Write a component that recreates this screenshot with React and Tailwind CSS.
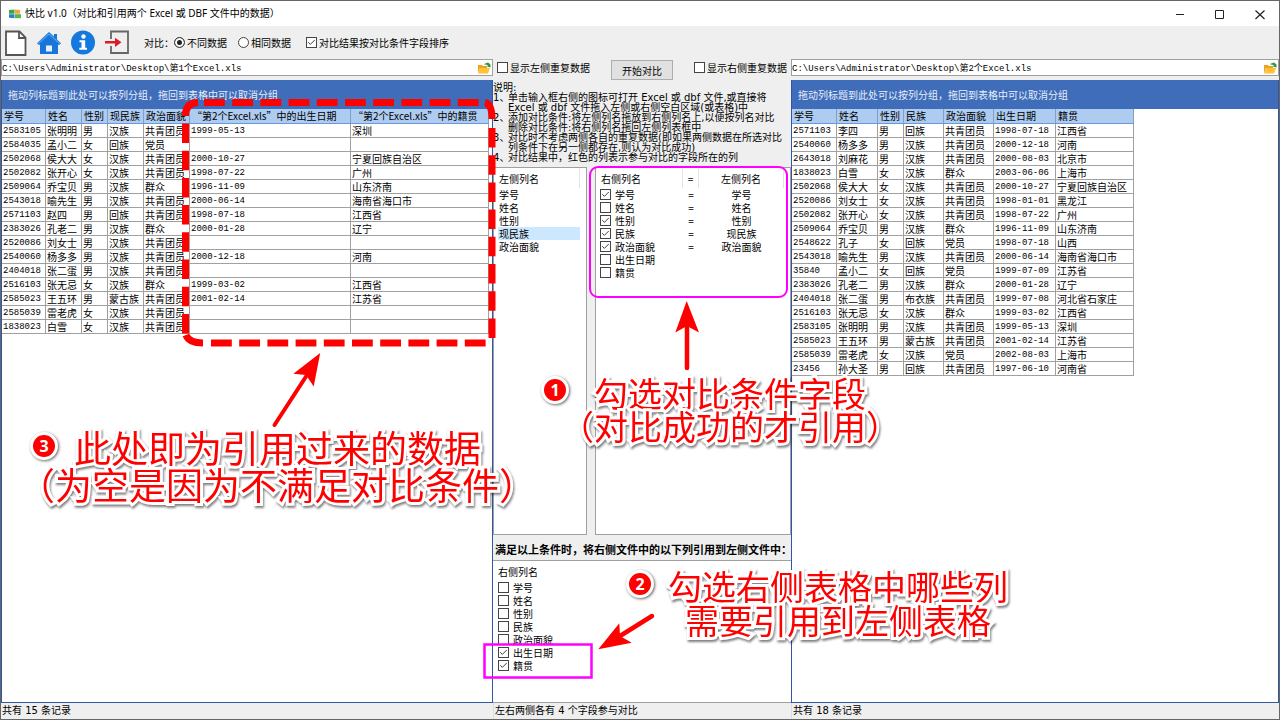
import React from 'react';
import { Check } from 'lucide-react';

const leftColumns = [
  { name: '学号', width: 'w-[44px]' },
  { name: '姓名', width: 'w-[36px]' },
  { name: '性别', width: 'w-[26px]' },
  { name: '现民族', width: 'w-[36px]' },
  { name: '政治面貌', width: 'w-[46px]' },
  { name: '“第2个Excel.xls”中的出生日期', width: 'w-[161px]' },
  { name: '“第2个Excel.xls”中的籍贯', width: 'w-[138px]' },
];

const leftRows = [
  ['2583105', '张明明', '男', '汉族', '共青团员', '1999-05-13', '深圳'],
  ['2584035', '孟小二', '女', '回族', '党员', '', ''],
  ['2502068', '侯大大', '女', '汉族', '共青团员', '2000-10-27', '宁夏回族自治区'],
  ['2502082', '张开心', '女', '汉族', '共青团员', '1998-07-22', '广州'],
  ['2509064', '乔宝贝', '男', '汉族', '群众', '1996-11-09', '山东济南'],
  ['2543018', '喻先生', '男', '汉族', '共青团员', '2000-06-14', '海南省海口市'],
  ['2571103', '赵四', '男', '回族', '共青团员', '1998-07-18', '江西省'],
  ['2383026', '孔老二', '男', '汉族', '群众', '2000-01-28', '辽宁'],
  ['2520086', '刘女士', '男', '汉族', '共青团员', '', ''],
  ['2540060', '杨多多', '男', '汉族', '共青团员', '2000-12-18', '河南'],
  ['2404018', '张二蛋', '男', '汉族', '共青团员', '', ''],
  ['2516103', '张无忌', '女', '汉族', '群众', '1999-03-02', '江西省'],
  ['2585023', '王五环', '男', '蒙古族', '共青团员', '2001-02-14', '江苏省'],
  ['2585039', '雷老虎', '女', '汉族', '共青团员', '', ''],
  ['1838023', '白雪', '女', '汉族', '共青团员', '', ''],
];

const rightColumns = [
  { name: '学号', width: 'w-[45px]' },
  { name: '姓名', width: 'w-[41px]' },
  { name: '性别', width: 'w-[26px]' },
  { name: '民族', width: 'w-[40px]' },
  { name: '政治面貌', width: 'w-[50px]' },
  { name: '出生日期', width: 'w-[62px]' },
  { name: '籍贯', width: 'w-[78px]' },
];

const rightRows = [
  ['2571103', '李四', '男', '回族', '共青团员', '1998-07-18', '江西省'],
  ['2540060', '杨多多', '男', '汉族', '共青团员', '2000-12-18', '河南'],
  ['2643018', '刘麻花', '男', '汉族', '共青团员', '2000-08-03', '北京市'],
  ['1838023', '白雪', '女', '汉族', '群众', '2003-06-06', '上海市'],
  ['2502068', '侯大大', '女', '汉族', '共青团员', '2000-10-27', '宁夏回族自治区'],
  ['2520086', '刘女士', '女', '汉族', '共青团员', '1998-01-01', '黑龙江'],
  ['2502082', '张开心', '女', '汉族', '共青团员', '1998-07-22', '广州'],
  ['2509064', '乔宝贝', '男', '汉族', '群众', '1996-11-09', '山东济南'],
  ['2548622', '孔子', '女', '回族', '党员', '1998-07-18', '山西'],
  ['2543018', '喻先生', '男', '汉族', '共青团员', '2000-06-14', '海南省海口市'],
  ['35840', '孟小二', '女', '回族', '党员', '1999-07-09', '江苏省'],
  ['2383026', '孔老二', '男', '汉族', '群众', '2000-01-28', '辽宁'],
  ['2404018', '张二蛋', '男', '布衣族', '共青团员', '1999-07-08', '河北省石家庄'],
  ['2516103', '张无忌', '女', '汉族', '群众', '1999-03-02', '江西省'],
  ['2583105', '张明明', '男', '汉族', '共青团员', '1999-05-13', '深圳'],
  ['2585023', '王五环', '男', '蒙古族', '共青团员', '2001-02-14', '江苏省'],
  ['2585039', '雷老虎', '女', '汉族', '党员', '2002-08-03', '上海市'],
  ['23456', '孙大圣', '男', '回族', '共青团员', '1997-06-10', '河南省'],
];

const leftFields = ['学号', '姓名', '性别', '现民族', '政治面貌'];

const mappings = [
  { right: '学号', left: '学号', checked: true },
  { right: '姓名', left: '姓名', checked: false },
  { right: '性别', left: '性别', checked: true },
  { right: '民族', left: '现民族', checked: true },
  { right: '政治面貌', left: '政治面貌', checked: true },
  { right: '出生日期', left: '', checked: false },
  { right: '籍贯', left: '', checked: false },
];

const quoteFields = [
  { name: '学号', checked: false },
  { name: '姓名', checked: false },
  { name: '性别', checked: false },
  { name: '民族', checked: false },
  { name: '政治面貌', checked: false },
  { name: '出生日期', checked: true },
  { name: '籍贯', checked: true },
];

const help = [
  ['单击输入框右侧的图标可打开 Excel 或 dbf 文件,或直接将', 'Excel 或 dbf 文件拖入左侧或右侧空白区域(或表格)中'],
  ['添加对比条件:将左侧列名拖放到右侧列名上,以便按列名对比', '删除对比条件:将右侧列名拖回左侧列表框中'],
  ['对比时不考虑两侧各自的重复数据(即如果两侧数据在所选对比', '列条件下在另一侧都存在,则认为对比成功)'],
  ['对比结果中，红色的列表示参与对比的字段所在的列'],
];

const Checkbox = ({ label, checked, gap = 'gap-[2px]' }) => (
  <label className={`flex items-center whitespace-nowrap ${gap}`}>
    <span className="grid h-[11px] w-[11px] shrink-0">
      <input
        type="checkbox"
        defaultChecked={checked}
        className="peer col-start-1 row-start-1 h-[11px] w-[11px] appearance-none border border-[#444] bg-white"
      />
      <Check
        className="pointer-events-none invisible col-start-1 row-start-1 h-[11px] w-[11px] p-px text-[#333] peer-checked:visible"
        strokeWidth={2.5}
      />
    </span>
    {label}
  </label>
);

const Radio = ({ label, checked }) => (
  <label className="flex items-center gap-[2px] whitespace-nowrap">
    <input
      type="radio"
      name="mode"
      defaultChecked={checked}
      className="h-[11px] w-[11px] appearance-none rounded-full border border-[#444] bg-white checked:bg-[#222] checked:shadow-[inset_0_0_0_2px_white]"
    />
    {label}
  </label>
);

const FolderIcon = () => (
  <svg viewBox="0 0 14 12" className="h-3 w-[14px]">
    <path d="M1 3h4l1 1h4v2H3L1 11z" fill="#f0a020" />
    <path d="M3 6h10l-2 5.500H1z" fill="#ffc23c" />
    <path d="M7 2.500Q8 .5 10.500 1V0L13.500 2.500V5.500L10 4.500L11 3.500Q9 2 7 2.500z" fill="#2c9c3c" />
  </svg>
);

const DataTable = ({ columns, rows }) => (
  <table className="table-fixed border-separate border-spacing-0 self-start">
    <colgroup>
      {columns.map((c) => (
        <col key={c.name} className={c.width} />
      ))}
    </colgroup>
    <thead>
      <tr className="bg-[#aecbf0]">
        {columns.map((c) => (
          <th
            key={c.name}
            className="h-[15px] overflow-hidden border-r border-b border-r-[#7f9fcc] border-b-[#6a98dc] p-0 pl-[2px] text-left leading-[14px] font-normal whitespace-nowrap"
          >
            {c.name}
          </th>
        ))}
      </tr>
    </thead>
    <tbody>
      {rows.map((row) => (
        <tr key={row[0]}>
          {row.map((value, i) => (
            <td
              key={columns[i].name}
              className={`h-[14px] overflow-hidden border-r border-b border-[#a0a0a0] p-0 pl-px whitespace-nowrap ${
                i === 0 || i === 5
                  ? 'pt-[2px] font-["Liberation_Mono",monospace] text-[9px] leading-[11px]'
                  : 'leading-[13px]'
              }`}
            >
              {value}
            </td>
          ))}
        </tr>
      ))}
    </tbody>
  </table>
);

const FilePane = ({ path, label, columns, rows }) => (
  <section className="flex min-w-0 flex-col">
    <div className="mb-1 flex h-[17px] items-center border border-[#a0a0a0] bg-white pr-px">
      <input
        type="text"
        aria-label={label}
        defaultValue={path}
        className='h-full min-w-0 flex-1 bg-transparent font-["Liberation_Mono","Noto_Sans_CJK_SC",monospace] text-[9px] outline-none'
      />
      <button type="button" aria-label="打开文件">
        <FolderIcon />
      </button>
    </div>
    <div className="flex min-h-0 flex-1 flex-col overflow-hidden border-x border-b border-[#2f57a8] bg-white">
      <div className="flex h-[29px] shrink-0 items-center bg-[#3f6db9] px-[6px] whitespace-nowrap text-[#e6eefb]">
        拖动列标题到此处可以按列分组，拖回到表格中可以取消分组
      </div>
      <DataTable columns={columns} rows={rows} />
    </div>
  </section>
);

const Toolbar = () => (
  <div className="flex h-[33px] shrink-0 items-center pl-[3px] whitespace-nowrap">
    <button type="button" aria-label="新建" className="mr-2">
      <svg viewBox="0 0 24 28" className="h-7 w-6">
        <path d="M2 2.500h13.500l6 6V26H2z" fill="#fff" stroke="#555" strokeWidth="1.800" />
        <path d="M15 2.500V9h6.500" fill="none" stroke="#555" strokeWidth="1.800" />
      </svg>
    </button>
    <button type="button" aria-label="主页" className="mr-2">
      <svg viewBox="0 0 26 26" className="h-[26px] w-[26px]">
        <path d="M13 2l5 4.500V4h3v5.500l4 3.700-1.500 1.600H22V24H4v-9.200H2.500L1 13.200z" fill="#1976d8" />
        <path d="M2 13.800L13 4l11 9.800" fill="none" stroke="#4ea0f0" strokeWidth="1.200" />
        <path d="M10 15.500h6v6h-6z" fill="#e4f0fc" />
      </svg>
    </button>
    <button type="button" aria-label="关于" className="mr-2">
      <svg viewBox="0 0 26 26" className="h-[26px] w-[26px]">
        <circle cx="13" cy="12.500" r="12" fill="#1478dc" />
        <circle cx="13.500" cy="6.500" r="2.200" fill="#fff" />
        <path d="M9.500 10.300h5.700v7.400h1.800v2H9.300v-2h2.200v-5.400h-2z" fill="#fff" />
      </svg>
    </button>
    <button type="button" aria-label="退出" className="mr-[14px]">
      <svg viewBox="0 0 26 26" className="h-[26px] w-[26px]">
        <path d="M7 9V1.500h17v21.500H7V16" fill="none" stroke="#666" strokeWidth="1.800" />
        <path d="M1 11h10V7.700l6.500 4.600L11 17v-3.400H1z" fill="#d81e28" />
      </svg>
    </button>
    <span>对比：</span>
    <div className="flex items-center gap-[11px]">
      <Radio label="不同数据" checked />
      <Radio label="相同数据" />
    </div>
    <div className="ml-[15px]">
      <Checkbox label="对比结果按对比条件字段排序" checked />
    </div>
  </div>
);

const ComparePanel = () => (
  <section className="flex min-w-0 flex-col">
    <div className="flex h-[21px] items-start justify-between px-1 pt-px">
      <Checkbox label="显示左侧重复数据" gap="gap-[2px]" />
      <button
        type="button"
        className="h-5 w-[62px] border border-[#adadad] bg-[#e1e1e1] whitespace-nowrap"
      >
        开始对比
      </button>
      <Checkbox label="显示右侧重复数据" gap="gap-[2px]" />
    </div>

    <div className='mb-1 pt-[3px] font-["DejaVu_Sans","Noto_Sans_CJK_SC",sans-serif] leading-[10px] whitespace-nowrap'>
      <p>说明:</p>
      <ol>
        {help.map((lines, i) => (
          <li key={lines[0]} className="flex">
            <span className="w-[15px] shrink-0">{i + 1}、</span>
            <div>
              {lines.map((line) => (
                <p key={line} className="h-[10px]">
                  {line}
                </p>
              ))}
            </div>
          </li>
        ))}
      </ol>
    </div>

    <div className="flex flex-1 gap-2">
      <div className="w-[94px] shrink-0 border border-[#a0a0a0] bg-white pr-[6px] pl-1">
        <div className="flex h-[20px] items-center border-r border-[#e4e4e4] pl-px">左侧列名</div>
        <ul>
          {leftFields.map((f) => (
            <li key={f} className={`h-[13px] pl-px leading-[13px] ${f === '现民族' ? 'bg-[#cce8ff]' : ''}`}>
              {f}
            </li>
          ))}
        </ul>
      </div>
      <div className="flex-1 border border-[#a0a0a0] bg-white">
        <table className="table-fixed border-separate border-spacing-0">
          <colgroup>
            <col className="w-[87px]" />
            <col className="w-[16px]" />
            <col className="w-[85px]" />
          </colgroup>
          <thead>
            <tr>
              <th className="h-[20px] border-r border-[#e4e4e4] p-0 pl-[5px] text-left font-normal">右侧列名</th>
              <th className="border-r border-[#e4e4e4] p-0 font-normal">=</th>
              <th className="border-r border-[#e4e4e4] p-0 font-normal">左侧列名</th>
            </tr>
          </thead>
          <tbody>
            {mappings.map((m) => (
              <tr key={m.right} className="leading-[13px]">
                <td className="h-[13px] p-0 pl-1">
                  <Checkbox label={m.right} checked={m.checked} gap="gap-1" />
                </td>
                <td className="p-0 text-center">{m.left ? '=' : ''}</td>
                <td className="p-0 text-center">{m.left}</td>
              </tr>
            ))}
          </tbody>
        </table>
      </div>
    </div>

    <h2 className="flex h-[25px] shrink-0 items-end pb-1 pl-[2px] text-[11px] leading-[14px] font-bold whitespace-nowrap">
      满足以上条件时，将右侧文件中的以下列引用到左侧文件中：
    </h2>
    <div className="h-[143px] shrink-0 border-y border-[#a0a0a0] bg-white pl-[5px]">
      <div className="flex h-[20px] items-center">右侧列名</div>
      <ul>
        {quoteFields.map((f) => (
          <li key={f.name} className="h-[13px] leading-[13px]">
            <Checkbox label={f.name} checked={f.checked} gap="gap-1" />
          </li>
        ))}
      </ul>
    </div>
  </section>
);

const Callout = ({ className, children }) => (
  <div
    className={`absolute whitespace-nowrap text-[#ff0000] drop-shadow-[1px_2px_1px_rgba(0,0,0,0.5)] [-webkit-text-stroke:6px_white] [paint-order:stroke_fill] ${className}`}
  >
    {children}
  </div>
);

const Badge = ({ n, className }) => (
  <span
    className={`absolute flex h-[28px] w-[28px] items-center justify-center rounded-full border-[3px] border-white bg-[#ff0000] font-["Open_Sans",sans-serif] text-base font-bold text-white shadow-[1px_1px_3px_rgba(0,0,0,0.6)] ${className}`}
  >
    {n}
  </span>
);

// Tutorial marks drawn above the window
const Annotations = () => (
  <div className="pointer-events-none absolute -inset-px">
    <svg width="1280" height="720" className="absolute top-0 left-0">
      <g fill="none" stroke="#ff0000" strokeWidth="7">
        <path d="M204 102.500H480" strokeDasharray="20.800 7.400" />
        <path d="M211 343H486" strokeDasharray="20.800 7.400" />
        <path d="M185.500 123.500V334" strokeDasharray="19.500 7.700" />
        <path d="M492 128V338.500" strokeDasharray="19.500 7.700" />
        <path d="M185.500 116Q185.500 102.500 198 102.500" />
        <path d="M485 102.500Q492 104 492 119" />
        <path d="M186 335Q189 343 203 343" />
      </g>
      <g fill="none" stroke="#ff00ff">
        <rect x="590" y="167" width="197" height="130" rx="8" strokeWidth="2" />
        <rect x="484.500" y="644.500" width="107" height="33" strokeWidth="2.500" />
      </g>
      <g fill="#ff0000" stroke="#ff0000" strokeLinecap="round">
        <path d="M687 326V368" strokeWidth="4.500" />
        <path d="M686.700 301L699 332.500L687 326L675.300 332.500Z" stroke="none" />
        <path d="M307 375L274.500 425" strokeWidth="4" />
        <path d="M320.200 353L313.700 386.500L306 375L293.400 373.700Z" stroke="none" />
        <path d="M620 636L652 616" strokeWidth="4.500" />
        <path d="M598.300 649.300L619.300 623.300L620 636L631.700 642.700Z" stroke="none" />
      </g>
    </svg>

    <Badge n="1" className="top-[376px] left-[541px]" />
    <Callout className="top-[376px] left-[560px] text-[34px] leading-[33px]">
      <p className="pl-[34px]">勾选对比条件字段</p>
      <p>（对比成功的才引用）</p>
    </Callout>

    <Badge n="2" className="top-[570px] left-[626px]" />
    <Callout className="top-[569px] left-[668px] text-[34px] leading-[34px]">
      <p>勾选右侧表格中哪些列</p>
      <p className="pl-[17px]">需要引用到左侧表格</p>
    </Callout>

    <Badge n="3" className="top-[432px] left-[30px]" />
    <Callout className="top-[429px] left-[18px] text-[37px] leading-[37px]">
      <p className="pl-[56px]">此处即为引用过来的数据</p>
      <p>（为空是因为不满足对比条件）</p>
    </Callout>
  </div>
);

const App = () => (
  <div className='relative flex h-screen min-h-[720px] flex-col overflow-hidden border border-[#666] bg-[#efefef] font-["Noto_Sans_CJK_SC",sans-serif] text-[10px] text-black'>
    <header className="flex h-[25px] shrink-0 items-center bg-white pl-2 whitespace-nowrap">
      <svg viewBox="0 0 12 10" className="mr-1 h-[10px] w-3">
        <path d="M0 1l5.500-.500v4.200H0z" fill="#39a845" />
        <path d="M6 .5L11 1v3.700H6z" fill="#f2a63a" />
        <path d="M0 5.200h5.500v4L0 8.700z" fill="#2c7fd0" />
        <path d="M6 5.200h6v4H6z" fill="#55b948" />
      </svg>
      <h1 className='flex-1 font-["Noto_Sans","Noto_Sans_CJK_SC",sans-serif]'>
        快比 v1.0（对比和引用两个 Excel 或 DBF 文件中的数据）
      </h1>
      <div className="flex items-center gap-[26px] pr-[12px]">
        <button type="button" aria-label="最小化">
          <svg viewBox="0 0 14 14" className="h-[14px] w-[14px]">
            <path d="M3 7.500h8" stroke="#222" />
          </svg>
        </button>
        <button type="button" aria-label="最大化">
          <svg viewBox="0 0 14 14" className="h-[14px] w-[14px]">
            <path d="M2.500 3.500h8v8h-8z" fill="none" stroke="#222" />
          </svg>
        </button>
        <button type="button" aria-label="关闭">
          <svg viewBox="0 0 14 14" className="h-[14px] w-[14px]">
            <path d="M2.500 3.500l9 8.500M11.500 3.500l-9 8.500" stroke="#222" strokeWidth="1.200" />
          </svg>
        </button>
      </div>
    </header>

    <Toolbar />

    <main className="grid min-h-0 flex-1 grid-cols-[492fr_298px_488fr]">
      <FilePane
        path="C:\Users\Administrator\Desktop\第1个Excel.xls"
        label="左侧文件"
        columns={leftColumns}
        rows={leftRows}
      />
      <ComparePanel />
      <FilePane
        path="C:\Users\Administrator\Desktop\第2个Excel.xls"
        label="右侧文件"
        columns={rightColumns}
        rows={rightRows}
      />
    </main>

    <footer className='grid h-4 shrink-0 grid-cols-[492fr_298px_488fr] items-center font-["DejaVu_Sans","Noto_Sans_CJK_SC",sans-serif] leading-4 whitespace-nowrap'>
      <span className="pl-px">共有 15 条记录</span>
      <span className="border-l border-[#ddd] pl-px">左右两侧各有 4 个字段参与对比</span>
      <span className="border-l border-[#ddd] pl-px">共有 18 条记录</span>
    </footer>

    <Annotations />
  </div>
);

export default App;
